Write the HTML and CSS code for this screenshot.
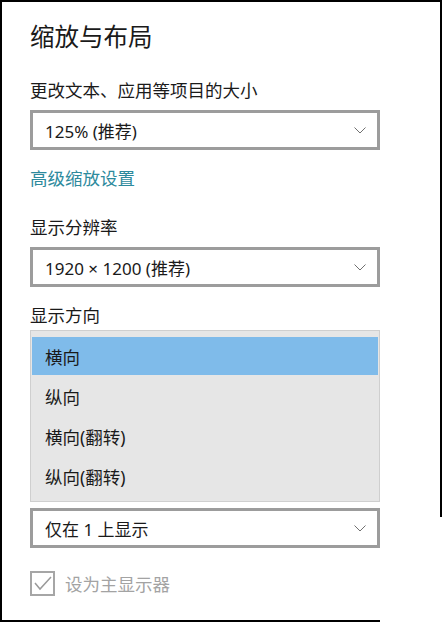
FILE: index.html
```html
<!DOCTYPE html>
<html lang="zh-CN">
<head>
    <meta charset="UTF-8">
    <meta name="viewport" content="width=device-width, initial-scale=1.0">
    <title>缩放与布局</title>
    <link rel="stylesheet" href="styles.css">
</head>
<body>
    <div class="panel">
        <h1 class="title">缩放与布局</h1>

        <div class="label first">更改文本、应用等项目的大小</div>
        <div class="combo">
            <span>125% (推荐)</span>
            <svg class="chevron" width="12" height="7" viewBox="0 0 12 7"><polyline points="0.5,0.5 6,6 11.5,0.5" /></svg>
        </div>

        <a class="link" href="#">高级缩放设置</a>

        <div class="label">显示分辨率</div>
        <div class="combo">
            <span>1920 × 1200 (推荐)</span>
            <svg class="chevron" width="12" height="7" viewBox="0 0 12 7"><polyline points="0.5,0.5 6,6 11.5,0.5" /></svg>
        </div>

        <div class="label open">显示方向</div>
        <ul class="menu">
            <li class="selected">横向</li>
            <li>纵向</li>
            <li>横向(翻转)</li>
            <li>纵向(翻转)</li>
        </ul>

        <div class="combo last">
            <span>仅在 1 上显示</span>
            <svg class="chevron" width="12" height="7" viewBox="0 0 12 7"><polyline points="0.5,0.5 6,6 11.5,0.5" /></svg>
        </div>

        <label class="check">
            <span class="box">
                <svg width="21" height="21" viewBox="0 0 21 21"><polyline points="3,10 8,16 19,4" /></svg>
            </span>
            设为主显示器
        </label>
    </div>
</body>
</html>
```

FILE: styles.css
```css
body {
    margin: 0;
    background-color: #ffffff;
    font-family: "Noto Sans", "Noto Sans CJK SC", sans-serif;
    color: #1a1a1a;
}
.panel {
    position: relative;
    box-sizing: border-box;
    width: 442px;
    height: 622px;
    border-top: 2px solid #000;
    border-left: 2px solid #000;
    padding: 19px 0 0 28px;
    overflow: hidden;
}
/* the cropped frame: right edge stops early, bottom edge is short */
.panel::after {
    content: "";
    position: absolute;
    top: -2px;
    right: 0;
    width: 2px;
    height: 517px;
    background: #000;
}
.panel::before {
    content: "";
    position: absolute;
    left: -2px;
    bottom: 0;
    width: 380px;
    height: 2px;
    background: #000;
}
.title {
    margin: 0;
    font-size: 24.5px;
    font-weight: normal;
    line-height: 32px;
}
.label {
    font-size: 17.5px;
    line-height: 24px;
    margin-top: 25px;
    margin-bottom: 8px;
}
.label.open {
    margin-top: 16px;
    margin-bottom: 3px;
}
.combo {
    box-sizing: border-box;
    width: 350px;
    height: 40px;
    border: 3px solid #9c9c9c;
    display: flex;
    align-items: center;
    justify-content: space-between;
    padding: 0 11px 0 12px;
    font-size: 17px;
    background: #fff;
}
.chevron polyline {
    fill: none;
    stroke: #707070;
    stroke-width: 1;
}
.link {
    display: block;
    margin-top: 16px;
    font-size: 17.5px;
    line-height: 24px;
    color: #2d8a9d;
    text-decoration: none;
}
.menu {
    list-style: none;
    box-sizing: border-box;
    width: 350px;
    margin: 0;
    padding: 5px 0;
    border: 1px solid #cfcfcf;
    background: #e6e6e6;
}
.menu li {
    height: 40px;
    box-sizing: border-box;
    border: 1px solid transparent;
    background-clip: padding-box;
    padding-left: 13px;
    font-size: 17.5px;
    display: flex;
    align-items: center;
}
.menu li.selected {
    background-color: #7fbbea;
}
.combo.last {
    margin-top: 6px;
}
.check {
    display: flex;
    align-items: center;
    gap: 10px;
    margin-top: 23px;
    font-size: 17.5px;
    color: #a3a3a3;
}
.box {
    box-sizing: border-box;
    width: 25px;
    height: 25px;
    border: 2px solid #a6a6a6;
    display: flex;
}
.box polyline {
    fill: none;
    stroke: #9a9a9a;
    stroke-width: 1.5;
}
```
